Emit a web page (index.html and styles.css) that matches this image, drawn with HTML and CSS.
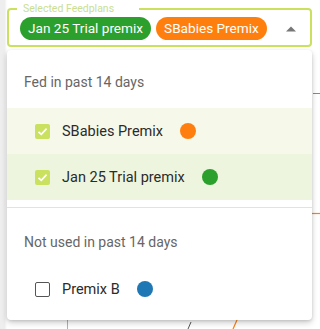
FILE: index.html
```html
<!DOCTYPE html>
<html>
<head>
<meta charset="utf-8">
<link rel="stylesheet" href="styles.css">
</head>
<body>
<svg class="chart-bg" width="320" height="329" viewBox="0 0 320 329">
  <line x1="313" y1="93.5" x2="320" y2="93.5" stroke="#888" stroke-width="1"/>
  <line x1="312" y1="213.5" x2="320" y2="213.5" stroke="#ff7f0e" stroke-width="1.2"/>
  <line x1="67.5" y1="318" x2="67.5" y2="329" stroke="#b9b48a" stroke-width="1"/>
  <line x1="191" y1="322" x2="188" y2="329" stroke="#555" stroke-width="1"/>
  <line x1="237" y1="320" x2="233" y2="329" stroke="#ff7f0e" stroke-width="1.2"/>
</svg>
<div class="page">
  <div class="select">
    <span class="select-label">Selected Feedplans</span>
    <div class="chips">
      <span class="chip chip-green">Jan 25 Trial premix</span>
      <span class="chip chip-orange">SBabies Premix</span>
    </div>
    <svg class="arrow" width="10" height="6" viewBox="0 0 10 6"><path d="M0 5.5 L5 0.5 L10 5.5 Z" fill="#777"/></svg>
  </div>
  <div class="menu">
    <div class="group-title first">Fed in past 14 days</div>
    <div class="item sel-light">
      <span class="cb checked"><svg width="15" height="15" viewBox="0 0 15 15"><path d="M3.5 7.8 L6.3 10.4 L11.6 4.6" fill="none" stroke="#fff" stroke-width="1.7"/></svg></span>
      <span class="item-text">SBabies Premix</span>
      <span class="dot dot-orange"></span>
    </div>
    <div class="item sel-dark">
      <span class="cb checked"><svg width="15" height="15" viewBox="0 0 15 15"><path d="M3.5 7.8 L6.3 10.4 L11.6 4.6" fill="none" stroke="#fff" stroke-width="1.7"/></svg></span>
      <span class="item-text">Jan 25 Trial premix</span>
      <span class="dot dot-green"></span>
    </div>
    <div class="divider"></div>
    <div class="group-title second">Not used in past 14 days</div>
    <div class="item">
      <span class="cb"></span>
      <span class="item-text">Premix B</span>
      <span class="dot dot-blue"></span>
    </div>
  </div>
</div>
</body>
</html>
```
FILE: styles.css
```css
html, body {
  margin: 0;
  padding: 0;
}
body {
  width: 320px;
  height: 329px;
  overflow: hidden;
  position: relative;
  background: linear-gradient(to right, #eeeeee 0, #eeeeee 5px, #fafafa 6px, #ffffff 8px);
  font-family: Roboto, "Noto Sans", sans-serif;
}
.chart-bg {
  position: absolute;
  left: 0;
  top: 0;
}
.page {
  position: relative;
  padding: 8px 0 0 7px;
  width: 305px;
}
.select {
  position: relative;
  box-sizing: border-box;
  height: 39px;
  border: 2px solid #c9e15f;
  border-radius: 4px;
  background: #fff;
  display: flex;
  align-items: flex-start;
  padding: 7px 0 0 11px;
}
.select-label {
  position: absolute;
  left: 8px;
  top: -8px;
  width: 122px;
  padding-left: 6px;
  box-sizing: border-box;
  background: #fff;
  font-size: 10.5px;
  line-height: 13px;
  color: #c9de92;
}
.chips {
  display: flex;
  gap: 5px;
}
.chip {
  height: 23px;
  line-height: 23px;
  border-radius: 12px;
  padding: 0 8px;
  color: #fff;
  font-size: 13.6px;
  white-space: nowrap;
}
.chip-green { background: #2ca02c; }
.chip-orange { background: #ff7f0e; }
.arrow {
  position: absolute;
  right: 14px;
  top: 16px;
}
.menu {
  margin-top: 3px;
  background: #fff;
  border-radius: 4px;
  box-shadow: 0 3px 6px rgba(0,0,0,0.18), 0 1px 3px rgba(0,0,0,0.12);
  padding-bottom: 8px;
}
.group-title {
  font-size: 14px;
  line-height: 20px;
  color: #666;
  padding-left: 17px;
}
.group-title.first {
  padding-top: 22px;
  padding-bottom: 16px;
}
.group-title.second {
  padding-top: 24px;
  padding-bottom: 14px;
}
.item {
  height: 46px;
  display: flex;
  align-items: center;
  padding-left: 28px;
}
.sel-light { background: #f6f9ea; }
.sel-dark { background: #eef5de; }
.cb {
  box-sizing: border-box;
  width: 15px;
  height: 15px;
  border: 1.6px solid #555;
  border-radius: 2px;
  display: flex;
}
.cb.checked {
  border: none;
  background: #c9e15f;
}
.item-text {
  margin-left: 12px;
  font-size: 14.5px;
  color: #2b2b2b;
}
.dot {
  width: 16px;
  height: 16px;
  border-radius: 50%;
  margin-left: 17px;
}
.dot-orange { background: #ff7f0e; }
.dot-green { background: #2ca02c; }
.dot-blue { background: #1f77b4; }
.divider {
  margin-top: 7px;
  height: 1px;
  background: #e2e2e2;
}
```
